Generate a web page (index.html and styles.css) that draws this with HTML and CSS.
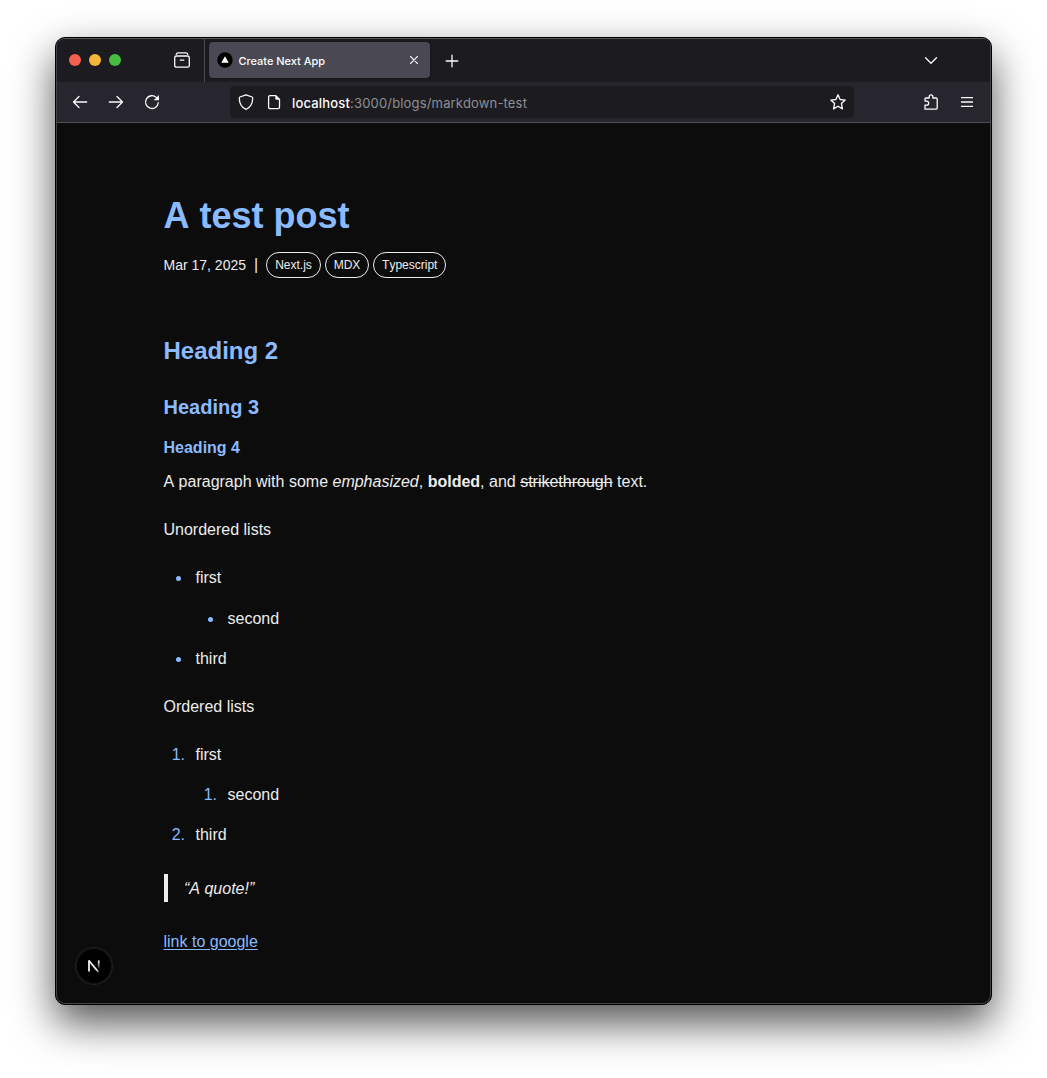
FILE: index.html
```html
<!DOCTYPE html>
<html lang="en">
<head>
<meta charset="utf-8">
<title>Create Next App</title>
<link rel="stylesheet" href="styles.css">
</head>
<body>
<div class="window">
  <div class="frame">
    <header class="tab-strip">
      <div class="lights"><span class="light red"></span><span class="light yellow"></span><span class="light green"></span></div>
      <svg class="icon view" viewBox="0 0 16 16"><rect x=".7" y="4" width="14.6" height="11.2" rx="1.8"/><path d="M2.200 2.400q.3-1.600 2-1.600h7.600q1.700 0 2 1.600M6.200 8.100h3.600"/></svg>
      <div class="tab">
        <svg class="favicon" viewBox="0 0 16 16"><circle cx="8" cy="8" r="7.700" fill="#000"/><path d="M8 4.300 11.700 10.800H4.300z" fill="#fff"/></svg>
        <span class="tab-title">Create Next App</span>
        <svg class="close" viewBox="0 0 8 8"><path d="M.4.400 7.600 7.600M7.600.400.400 7.600"/></svg>
      </div>
      <svg class="icon plus" viewBox="0 0 12 12"><path d="M6 .2v11.600M.2 6h11.600"/></svg>
      <svg class="icon chevron" viewBox="0 0 12 7"><path d="M.5.700 6 6.200 11.500.700"/></svg>
    </header>
    <nav class="toolbar">
      <svg class="icon" viewBox="0 0 16 16"><path d="M14.700 8H1.500M7 2.500 1.500 8 7 13.500"/></svg>
      <svg class="icon" viewBox="0 0 16 16"><path d="M1.300 8h13.200M9 2.500 14.500 8 9 13.500"/></svg>
      <svg class="icon" viewBox="0 0 16 16"><path d="M14.300 8.700A6.400 6.400 0 1 1 12.300 3.400"/><path d="M15 .900V6.300H9.600z" fill="#fbfbfe" stroke="none"/></svg>
      <div class="address">
        <svg class="icon shield" viewBox="0 0 16 16"><path d="M8 .8 14.100 3q.6.300.600 1C14.700 9.600 12.200 13.600 8 15.300 3.800 13.600 1.300 9.600 1.300 4q0-.7.600-1z"/></svg>
        <svg class="icon page" viewBox="0 0 16 16"><path d="M4 1.600h5.800L13.500 5.300v7.900q0 1.400-1.400 1.400H4q-1.400 0-1.400-1.400V3q0-1.400 1.400-1.400z"/><path d="M9.300 1.200v3.400q0 1.200 1.200 1.200h3.500z" fill="#fbfbfe" stroke="none"/></svg>
        <span class="url"><b>localhost</b>:3000/blogs/markdown-test</span>
        <svg class="icon star" viewBox="0 0 16 16"><path d="M8 .8 10.100 5.500 15.200 6.100 11.400 9.600 12.500 14.900 8 12.200 3.500 14.900 4.600 9.600.8 6.100 5.900 5.500z"/></svg>
      </div>
      <svg class="icon puzzle" viewBox="0 0 16 16"><path d="M2 15.200V11.200H3.600A2.050 2.050 0 0 0 3.600 7.100H2V4.900q0-.9.900-.9H6.200V2.700A1.850 1.850 0 0 1 9.900 2.700V4h3.200q1.100 0 1.100 1.100V14.100q0 1.100-1.100 1.100z"/></svg>
      <svg class="icon menu" viewBox="0 0 12 10"><path d="M0 .7h12M0 5h12M0 9.300h12"/></svg>
    </nav>
    <main class="page-body">
      <article class="prose">
        <h1>A test post</h1>
        <div class="meta"><time>Mar 17, 2025</time><span class="bar">|</span><div class="tags"><span class="tag">Next.js</span><span class="tag">MDX</span><span class="tag">Typescript</span></div></div>
        <h2>Heading 2</h2>
        <h3>Heading 3</h3>
        <h4>Heading 4</h4>
        <p>A paragraph with some <em>emphasized</em>, <strong>bolded</strong>, and <del>strikethrough</del> text.</p>
        <p>Unordered lists</p>
        <ul><li>first<ul><li>second</li></ul></li><li>third</li></ul>
        <p>Ordered lists</p>
        <ol><li>first<ol><li>second</li></ol></li><li>third</li></ol>
        <blockquote>“A quote!”</blockquote>
        <p><a href="#">link to google</a></p>
      </article>
      <div class="dev-badge">
        <svg viewBox="0 0 14 14">
          <defs>
            <linearGradient id="diag" gradientUnits="userSpaceOnUse" x1="7" y1="7" x2="12.500" y2="14"><stop offset=".5" stop-color="#fff"/><stop offset="1" stop-color="#fff" stop-opacity="0"/></linearGradient>
            <linearGradient id="stem" gradientUnits="userSpaceOnUse" x1="0" y1="2" x2="0" y2="10.500"><stop offset="0" stop-color="#fff"/><stop offset="1" stop-color="#fff" stop-opacity="0"/></linearGradient>
          </defs>
          <path d="M2 12.500V1.500" stroke="#fff"/>
          <path d="M1.800 1.500 11.800 13.500" stroke="url(#diag)"/>
          <path d="M11.700 1.500V9.500" stroke="url(#stem)"/>
        </svg>
      </div>
    </main>
  </div>
</div>
</body>
</html>
```
FILE: styles.css
```css
* { box-sizing: border-box; }

body {
  margin: 0;
  height: 1078px;
  padding: 37px 55px 0;
  background: #fff;
  font-family: "Liberation Sans", Arial, sans-serif;
  overflow: hidden;
}

.window {
  width: 937px;
  height: 968px;
  border: 1px solid #000;
  border-radius: 10px;
  background: #000;
  box-shadow: 0 18px 42px rgba(0, 0, 0, .68);
}

.frame {
  display: flex;
  flex-direction: column;
  height: 100%;
  border: 1px solid #444447;
  border-top-color: #5a595d;
  border-radius: 9px;
  background: #0c0c0c;
  overflow: hidden;
}

.icon {
  flex: none;
  width: 16px;
  height: 16px;
  fill: none;
  stroke: #fbfbfe;
  stroke-width: 1.3;
  stroke-linecap: round;
  stroke-linejoin: round;
  overflow: visible;
}

/* Tab strip */
.tab-strip {
  display: flex;
  align-items: center;
  flex: none;
  height: 43px;
  padding: 0 53px 1px 12px;
  background: #1c1b20;
}

.lights { display: flex; gap: 8px; }
.light { width: 12px; height: 12px; border-radius: 50%; }
.red { background: #f4604f; }
.yellow { background: #f6b63a; }
.green { background: #47bd42; }

.view { margin-left: 53px; }

.tab {
  display: flex;
  align-items: center;
  width: 221px;
  height: 36px;
  margin-left: 19px;
  padding: 0 12px 0 8px;
  border-radius: 4px;
  background: #4a4953;
  box-shadow: 0 0 3px rgba(0, 0, 0, .5);
  position: relative;
}

.tab::before {
  content: "";
  position: absolute;
  left: -5px;
  top: -3px;
  width: 1px;
  height: 43px;
  background: #4a4a4f;
}

.favicon { width: 16px; height: 16px; }

.tab-title {
  flex: 1;
  margin-left: 5.5px;
  padding-top: 1px;
  font: 500 11px/16px Inter, sans-serif;
  letter-spacing: -.03px;
  color: #fbfbfe;
}

.close { width: 8px; height: 8px; stroke: #fbfbfe; stroke-width: 1.2; stroke-linecap: round; }
.plus { width: 12px; height: 12px; margin: 1px 0 0 15.5px; }
.chevron { width: 12px; height: 7px; margin-left: auto; }

/* Navigation toolbar */
.toolbar {
  display: flex;
  align-items: center;
  flex: none;
  gap: 20px;
  height: 41px;
  padding: 0 17px 0 15px;
  border-bottom: 1px solid #4f4e58;
  background: #27252e;
}

.address {
  display: flex;
  align-items: center;
  width: 624px;
  height: 32px;
  margin-left: 50px;
  padding: 0 8px;
  border-radius: 4px;
  background: #1c1b20;
}

.page { margin-left: 12px; }
.url {
  flex: 1;
  margin-left: 10px;
  padding-top: 1px;
  font: 400 13px/18px Inter, sans-serif;
  letter-spacing: .17px;
  color: #8f8f94;
}
.url b { font-weight: 500; color: #fbfbfe; }

.puzzle { margin-left: 49px; }
.menu { width: 12px; height: 10px; stroke-linecap: butt; margin-left: 2px; }

/* Article */
.page-body {
  flex: 1;
  position: relative;
  padding: 73px 106.500px 0;
}

.prose { color: #ededed; font-size: 16px; line-height: 28px; font-kerning: none; }
.prose h1, .prose h2, .prose h3, .prose h4, .prose a, .prose li::marker { color: #8abaff; }

.prose h1 { margin: 0; font-size: 36px; line-height: 40px; }

.meta { display: flex; align-items: center; height: 26px; margin-top: 16px; font-size: 14px; line-height: 20px; }
.bar { margin: 0 8px; font-size: 16px; }
.tags { display: flex; gap: 3.8px; }
.tag {
  height: 26px;
  padding: 0 8px;
  border: 1px solid #ededed;
  border-radius: 13px;
  font-size: 12px;
  line-height: 24px;
}

.prose h2 { margin: 57px 0 0; font-size: 24px; line-height: 32px; }
.prose h3 { margin: 24px 0 0; font-size: 20px; line-height: 32px; }
.prose h4 { margin: 13px 0 8px; font-size: 16px; line-height: 24px; }

.prose p { margin: 0 0 20px; }
.prose ul, .prose ol { margin: 0 0 20px; }
.prose ul { padding-left: 28px; list-style: disc; }
.prose ol { padding-left: 26px; }
.prose ul > li { padding-left: 4px; }
.prose ol > li { padding-left: 6px; }
.prose li ol { margin: 12px 0; }
.prose li ul { margin: 13px 0 12px; }

.prose blockquote {
  height: 28px;
  margin: 25px 0 26px;
  padding-left: 16.5px;
  border-left: 4px solid #ededed;
  font-style: italic;
  line-height: 30px;
}

.prose a { text-underline-offset: 2px; }

/* Floating development indicator */
.dev-badge {
  position: absolute;
  left: 19px;
  bottom: 19px;
  display: flex;
  align-items: center;
  justify-content: center;
  width: 36px;
  height: 36px;
  border-radius: 50%;
  background: #000;
  box-shadow: 0 0 0 1px #222, inset 0 0 0 1px #171717;
}
.dev-badge svg { width: 14px; height: 14px; fill: none; stroke-width: 1.700; }
```
